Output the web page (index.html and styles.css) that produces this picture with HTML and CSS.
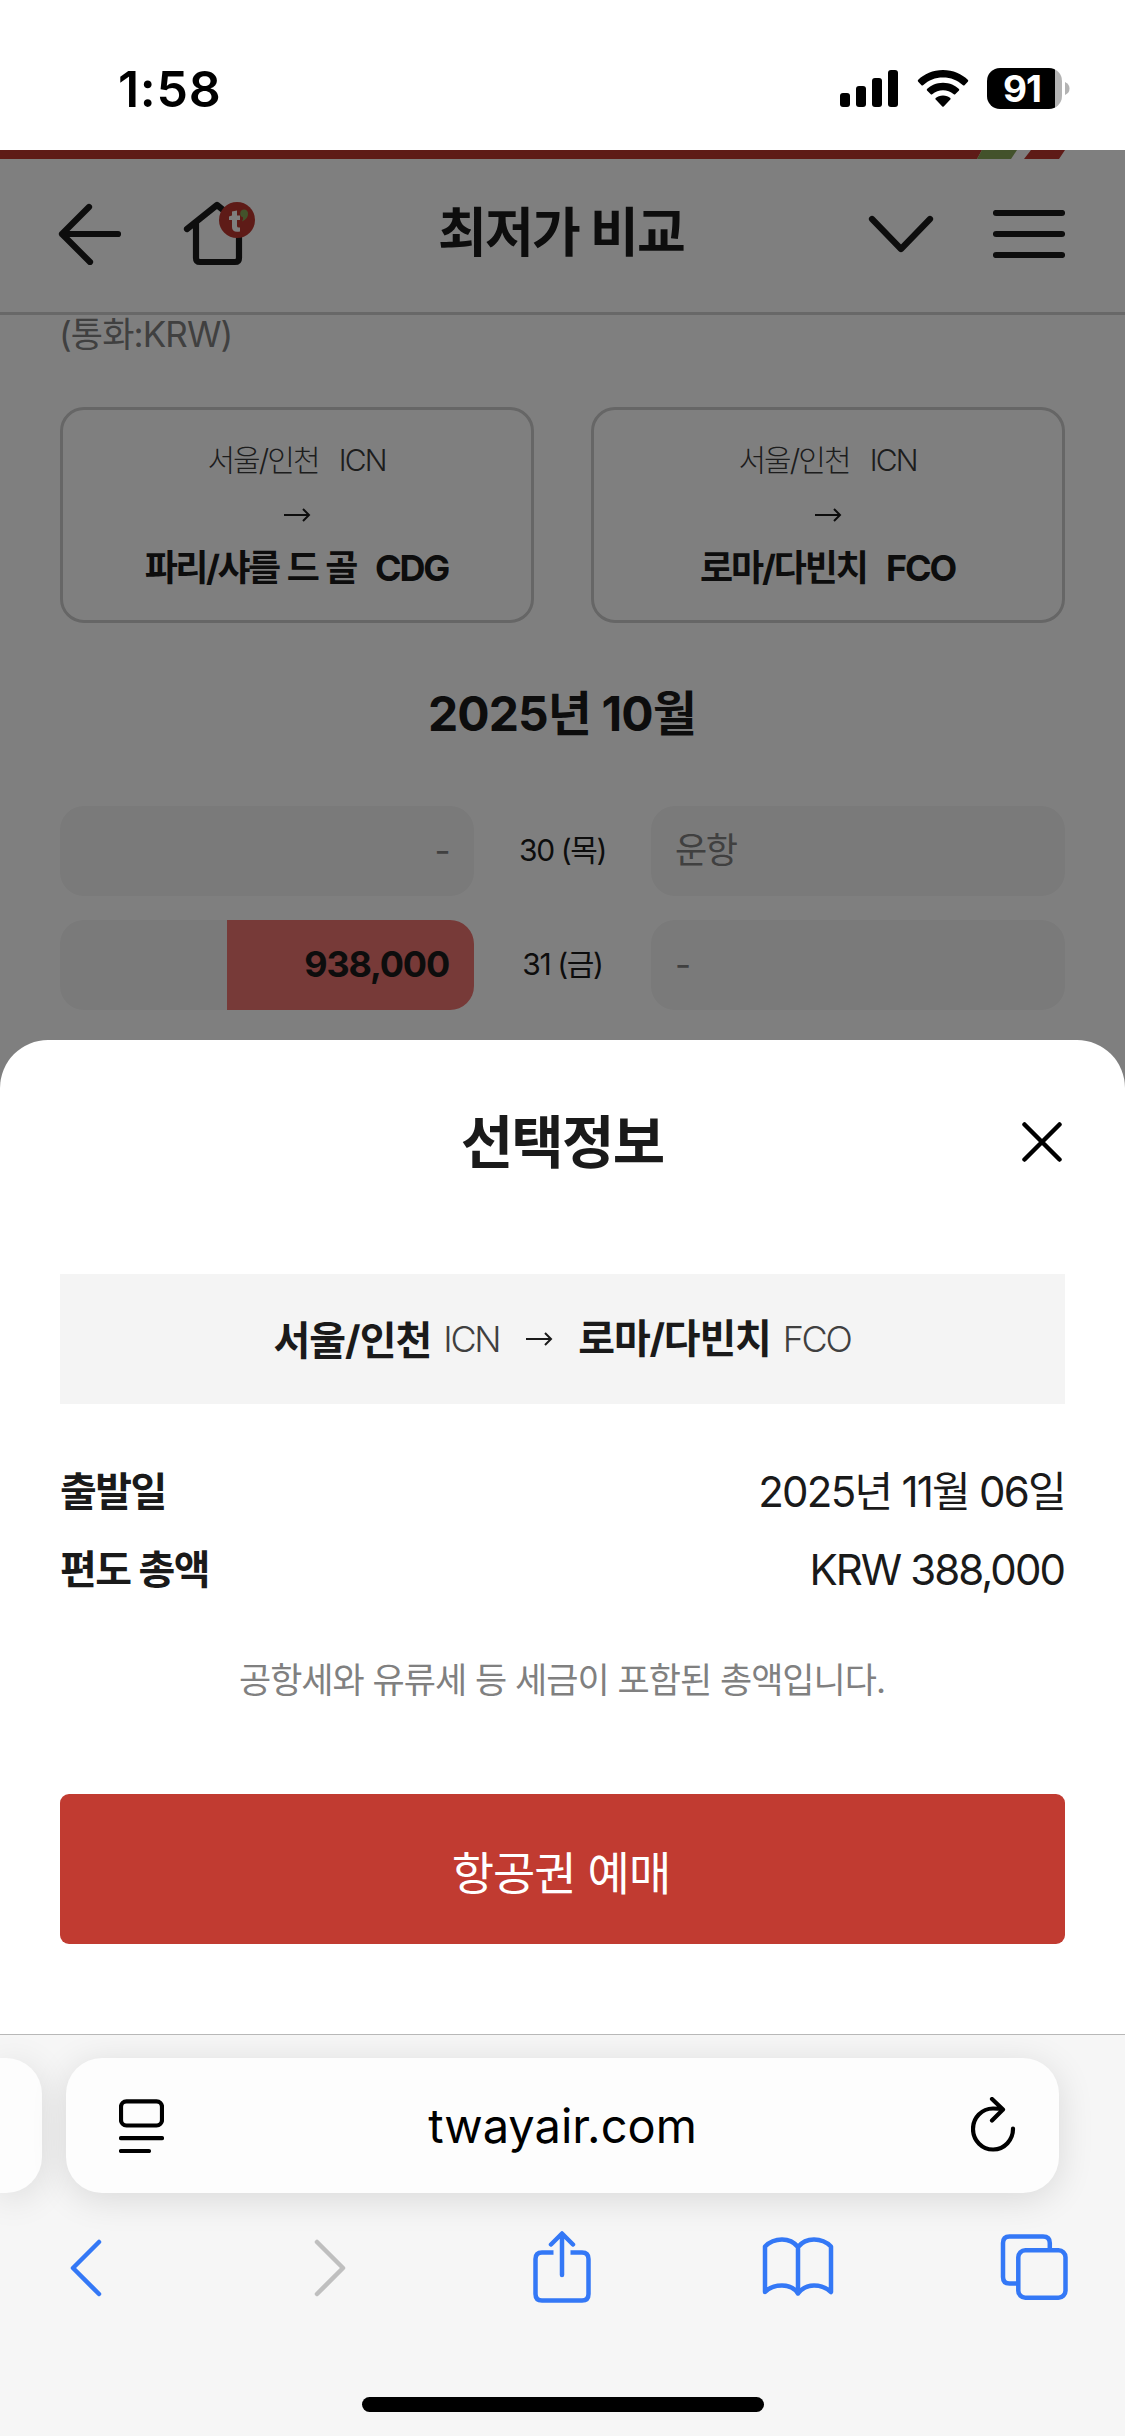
FILE: index.html
```html
<!DOCTYPE html>
<html lang="ko">
<head>
<meta charset="utf-8">
<title>최저가 비교</title>
<link rel="stylesheet" href="styles.css">
</head>
<body>
<div class="status">
  <span class="time">1:58</span>
  <div class="status-icons">
    <svg class="signal" width="58" height="37" viewBox="0 0 58 37"><rect x="0" y="23" width="10" height="14" rx="3"/><rect x="16" y="16" width="10" height="21" rx="3"/><rect x="32" y="8" width="10" height="29" rx="3"/><rect x="48" y="0" width="10" height="37" rx="3"/></svg>
    <svg class="wifi" width="52" height="38" viewBox="0 0 52 38"><path d="M26 0C36 0 45 4 51 10Q51.500 10.800 51 11.500L47.500 15.200Q46.800 15.700 46 15.200C40 10 34 7.500 26 7.500S12 10 6 15.200Q5.200 15.700 4.500 15.200L1 11.500Q.5 10.800 1 10C7 4 16 0 26 0Z"/><path d="M26 12.700C33 12.700 38 15.500 42 19Q42.500 19.800 42 20.500L38.200 24.300Q37.500 24.700 36.800 24.200C33.500 21.500 30 20.200 26 20.200S18.500 21.500 15.200 24.200Q14.500 24.700 13.800 24.300L10 20.500Q9.500 19.800 10 19C14 15.500 19 12.700 26 12.700Z"/><path d="M26 25.500C29 25.500 31.500 26.500 33.300 28Q34 28.800 33.300 29.600L26.700 36.500Q26 37.200 25.300 36.500L18.700 29.600Q18 28.800 18.700 28C20.500 26.500 23 25.500 26 25.500Z"/></svg>
    <div class="battery"><span>91</span></div>
    <svg class="nub" width="5" height="13" viewBox="0 0 5 13"><path d="M0 0Q4.500 2 4.500 6.500T0 13Z"/></svg>
  </div>
</div>

<main class="page">
  <svg class="stripe" width="1125" height="9" viewBox="0 0 1125 9"><path fill="#bd372f" d="M0 0H982L977 9H0ZM1031 0H1065L1059 9H1024Z"/><path fill="#87a556" d="M982 0H1017L1011 9H977Z"/></svg>
  <header class="header">
    <svg class="back" width="64" height="62" viewBox="0 0 64 62"><path d="M31 4L4 31L32 59M4 31H60"/></svg>
    <svg class="home" width="74" height="66" viewBox="0 0 74 66"><path d="M4 28L34 4L50 17M13 22V57Q13 61 17 61H52Q56 61 56 57V30"/><circle cx="54" cy="19" r="18"/><path class="tee" d="M49 10.500L54 9.500V14.500H57V19H54V25Q54 27 57 26.500V30.500Q49 32 49 26V19H46V15.500L49 14.500Z"/><path class="tick" d="M61 8.500a4 4 0 0 1 4 4.500q0 5-6 7.500q1.500-2.500 1-4.200a4 4 0 0 1 1-7.800Z"/></svg>
    <h1>최저가 비교</h1>
    <svg class="down" width="66" height="40" viewBox="0 0 66 40"><path d="M4 5L33 35L62 5"/></svg>
    <svg class="menu" width="72" height="48" viewBox="0 0 72 48"><path d="M3 3H69M3 24H69M3 45H69"/></svg>
  </header>

  <p class="currency">(통화:KRW)</p>
  <div class="cards">
    <section class="card">
      <div class="from"><span>서울/인천</span><span>ICN</span></div>
      <svg width="28" height="14" viewBox="0 0 28 14"><path d="M1 7H26M20 1L26 7L20 13"/></svg>
      <div class="to"><span class="spaced">파리/샤를 드 골</span><span>CDG</span></div>
    </section>
    <section class="card">
      <div class="from"><span>서울/인천</span><span>ICN</span></div>
      <svg width="28" height="14" viewBox="0 0 28 14"><path d="M1 7H26M20 1L26 7L20 13"/></svg>
      <div class="to"><span>로마/다빈치</span><span>FCO</span></div>
    </section>
  </div>
  <h2 class="month">2025년 10월</h2>
  <div class="fares">
    <div class="pill left">-</div><div class="date">30 (목)</div><div class="pill">운항</div>
    <div class="pill left fare">938,000</div><div class="date">31 (금)</div><div class="pill">-</div>
  </div>

  <div class="dim"></div>
  <section class="sheet">
    <div class="sheet-head">
      <h2>선택정보</h2>
      <svg class="close" width="40" height="40" viewBox="0 0 40 40"><path d="M2.500 2.500L37.500 37.500M37.500 2.500L2.500 37.500"/></svg>
    </div>
    <div class="route">
      <b>서울/인천</b><span class="code">ICN</span>
      <svg width="28" height="14" viewBox="0 0 28 14"><path d="M1 7H26M20 1L26 7L20 13"/></svg>
      <b class="dest">로마/다빈치</b><span class="code">FCO</span>
    </div>
    <div class="info"><b>출발일</b><span class="day">2025년 11월 06일</span></div>
    <div class="info"><b>편도 총액</b><span class="total">KRW 388,000</span></div>
    <p class="note">공항세와 유류세 등 세금이 포함된 총액입니다.</p>
    <button class="book">항공권 예매</button>
  </section>
</main>

<footer class="browser">
  <div class="tabs">
    <div class="tab prev"></div>
    <div class="tab address">
      <svg width="45" height="55" viewBox="0 0 45 55"><rect x="2" y="3.300" width="41" height="24.200" rx="5.500"/><path d="M2 40.200H43M2 53H30"/></svg>
      <span>twayair.com</span>
      <svg width="45" height="58" viewBox="0 0 45 58"><path d="M42 31.500A20 20.500 0 1 1 22 11.500Q28 11.500 32 12.500M21 2L32 12.500L21 23.500"/></svg>
    </div>
  </div>
  <nav class="tools">
    <svg width="34" height="60" viewBox="0 0 34 60"><path d="M30 4L4 30L30 56"/></svg>
    <svg class="off" width="34" height="60" viewBox="0 0 34 60"><path d="M4 4L30 30L4 56"/></svg>
    <svg class="share" width="58" height="72" viewBox="0 0 58 72"><path stroke-linecap="butt" d="M20.500 21.500H9Q2.500 21.500 2.500 28V63Q2.500 69.500 9 69.500H49Q55.500 69.500 55.500 63V28Q55.500 21.500 49 21.500H37.500"/><path d="M29 3V44M18 13.500L29 2.500L40 13.500"/></svg>
    <svg class="bookmarks" width="72" height="64" viewBox="0 0 72 64"><path d="M36 11V57.500M36 11Q30 3.500 20 3.500T3 10.500V56Q9 49.500 20 49.500T36 57.500Q42 49.500 52 49.500T69 56V10.500Q62 3.500 52 3.500T36 11"/></svg>
    <svg class="windows" width="68" height="68" viewBox="0 0 68 68"><rect x="18.300" y="16.300" width="47.200" height="47.400" rx="7"/><path stroke-linecap="butt" d="M49.800 16V9Q49.800 2.500 43 2.500H9.500Q3 2.500 3 9V43Q3 49.500 9.500 49.500H18"/></svg>
  </nav>
  <div class="indicator"></div>
</footer>
</body>
</html>
```
FILE: styles.css
```css
* { box-sizing: border-box; margin: 0; }
body { width: 1125px; height: 2436px; overflow: hidden; background: #fff; color: #1a1a1a; font-family: Inter, "Noto Sans CJK KR", sans-serif; }
svg { display: block; flex: none; fill: none; stroke: #1a1a1a; stroke-linecap: round; stroke-linejoin: round; }
h1, h2 { font-weight: 700; }

.status { height: 150px; display: flex; justify-content: space-between; padding: 59px 55px 0 118px; color: #000; }
.time { font-size: 50px; font-weight: 600; line-height: 60px; letter-spacing: .7px; }
.status-icons { display: flex; align-items: flex-start; padding-top: 9px; }
.status-icons svg { fill: #000; stroke: none; }
.signal { margin: 2px 19px 0 0; }
.wifi { margin: 2px 18px 0 0; }
.battery { width: 75px; height: 41px; border-radius: 13px; background: linear-gradient(90deg, #000 68px, #b3b3b3 68px); color: #fff; font-size: 37px; font-weight: 700; line-height: 41px; text-align: center; letter-spacing: -1px; padding-right: 5px; }
.status-icons .nub { fill: #b3b3b3; margin: 14px 0 0 3px; }

.page { position: relative; height: 1884px; overflow: hidden; }
.stripe { stroke: none; }
.header { height: 156px; border-bottom: 3px solid #d1d1d1; display: flex; align-items: center; padding: 0 60px 4px 58px; }
.header svg { stroke-width: 6.200; }
.home { margin-left: 61px; }
.home circle { fill: #bd372f; stroke: none; }
.home .tee { fill: #fff; stroke: none; }
.home .tick { fill: #87a556; stroke: none; }
h1 { flex: 1; text-align: center; font-size: 53px; line-height: 70px; letter-spacing: -1.700px; padding: 0 3px 1px 0; }
.down { margin-right: 59px; }

.currency { height: 92px; padding: 0 59px; font-size: 35px; line-height: 38px; color: #808080; letter-spacing: -.9px; }
.cards { display: flex; justify-content: space-between; padding: 0 60px; }
.card { width: 474px; height: 216px; border: 3px solid #ccc; border-radius: 24px; display: flex; flex-direction: column; align-items: center; padding-top: 28px; }
.card svg, .route svg { stroke-width: 2; stroke-linecap: butt; stroke-linejoin: miter; }
.card svg { margin: 26px 0 24px; }
.from, .to { display: flex; line-height: 44px; padding-right: 1px; }
.from { gap: 20px; font-size: 30px; font-weight: 300; color: #3a3a3a; letter-spacing: -1.900px; }
.to { gap: 19px; font-size: 36px; font-weight: 700; letter-spacing: -2.100px; }
.spaced { word-spacing: 2px; letter-spacing: -2.500px; }
.month { margin-top: 56px; padding-right: 1px; text-align: center; font-size: 48px; line-height: 70px; letter-spacing: -.9px; }
.fares { margin-top: 57px; padding: 0 60px; display: grid; grid-template-columns: 414px 1fr 414px; row-gap: 24px; line-height: 88px; }
.pill { height: 90px; border-radius: 24px; background: #f4f4f4; padding: 0 25px 0 24px; font-size: 35px; color: #808080; letter-spacing: -1.500px; }
.left { text-align: right; }
.fare { background: linear-gradient(90deg, #f4f4f4 167px, #ee7470 167px); color: #1a1a1a; font-weight: 700; font-size: 36px; letter-spacing: -1.200px; }
.date { text-align: center; font-size: 30px; letter-spacing: -1.400px; }

.dim { position: absolute; inset: 0; background: rgba(0, 0, 0, .5); }
.sheet { position: absolute; left: 0; right: 0; bottom: 0; height: 994px; padding: 0 60px; background: #fff; border-radius: 48px 48px 0 0; }
.sheet-head { height: 234px; padding: 63px 3px 0 42px; display: flex; align-items: flex-start; }
.sheet-head h2 { flex: 1; text-align: center; font-size: 57px; line-height: 80px; letter-spacing: -1.800px; }
.close { stroke: #000; stroke-width: 4.500; margin-top: 19px; }
.route { height: 130px; background: #f4f4f4; display: flex; justify-content: center; align-items: center; font-size: 40px; letter-spacing: -1px; padding-right: 1px; }
.route b { padding-bottom: 3px; }
.route .dest { padding-bottom: 6px; letter-spacing: -1.200px; }
.code { margin-left: 12px; font-size: 36px; font-weight: 300; color: #404040; letter-spacing: -2.300px; }
.route svg { margin: 0 25px 0 26px; }
.info { display: flex; justify-content: space-between; height: 78px; font-size: 42px; line-height: 78px; }
.info b { font-size: 40px; letter-spacing: -1.500px; }
.day { letter-spacing: -1.750px; }
.total { letter-spacing: -1.950px; padding-right: 1px; }
.route + .info { margin-top: 49px; }
.note { margin-top: 31px; padding-right: 1px; text-align: center; font-size: 35px; line-height: 80px; color: #808080; letter-spacing: -1px; }
.book { display: block; width: 1005px; height: 150px; margin-top: 74px; padding: 1px 3px 0 0; border: 0; border-radius: 9px; background: #c13b31; color: #fff; font: 400 46px Inter, "Noto Sans CJK KR", sans-serif; letter-spacing: -1px; }

.browser { height: 402px; border-top: 1px solid #b8b8b8; background: #f6f6f6; overflow: hidden; }
.tabs { display: flex; gap: 24px; padding-top: 23px; }
.tab { height: 135px; background: #fdfdfd; box-shadow: 0 6px 36px rgba(0, 0, 0, .12); }
.prev { width: 42px; border-radius: 0 36px 36px 0; }
.address { width: 993px; border-radius: 36px; padding: 0 43px 0 53px; display: flex; align-items: center; justify-content: space-between; color: #000; font-size: 47px; }
.address span { margin-right: 10px; }
.address svg { stroke: #000; stroke-width: 4.200; }
.tools { display: flex; align-items: center; height: 150px; padding-left: 69px; }
.tools svg { stroke: #3478f6; stroke-width: 4.500; }
.tools .off { stroke: #bfbfbf; margin-left: 210px; }
.share { margin: 0 171px 3px 186px; }
.windows { margin-left: 166px; }
.indicator { width: 402px; height: 15px; margin: 54px auto 0; border-radius: 8px; background: #000; }
```
